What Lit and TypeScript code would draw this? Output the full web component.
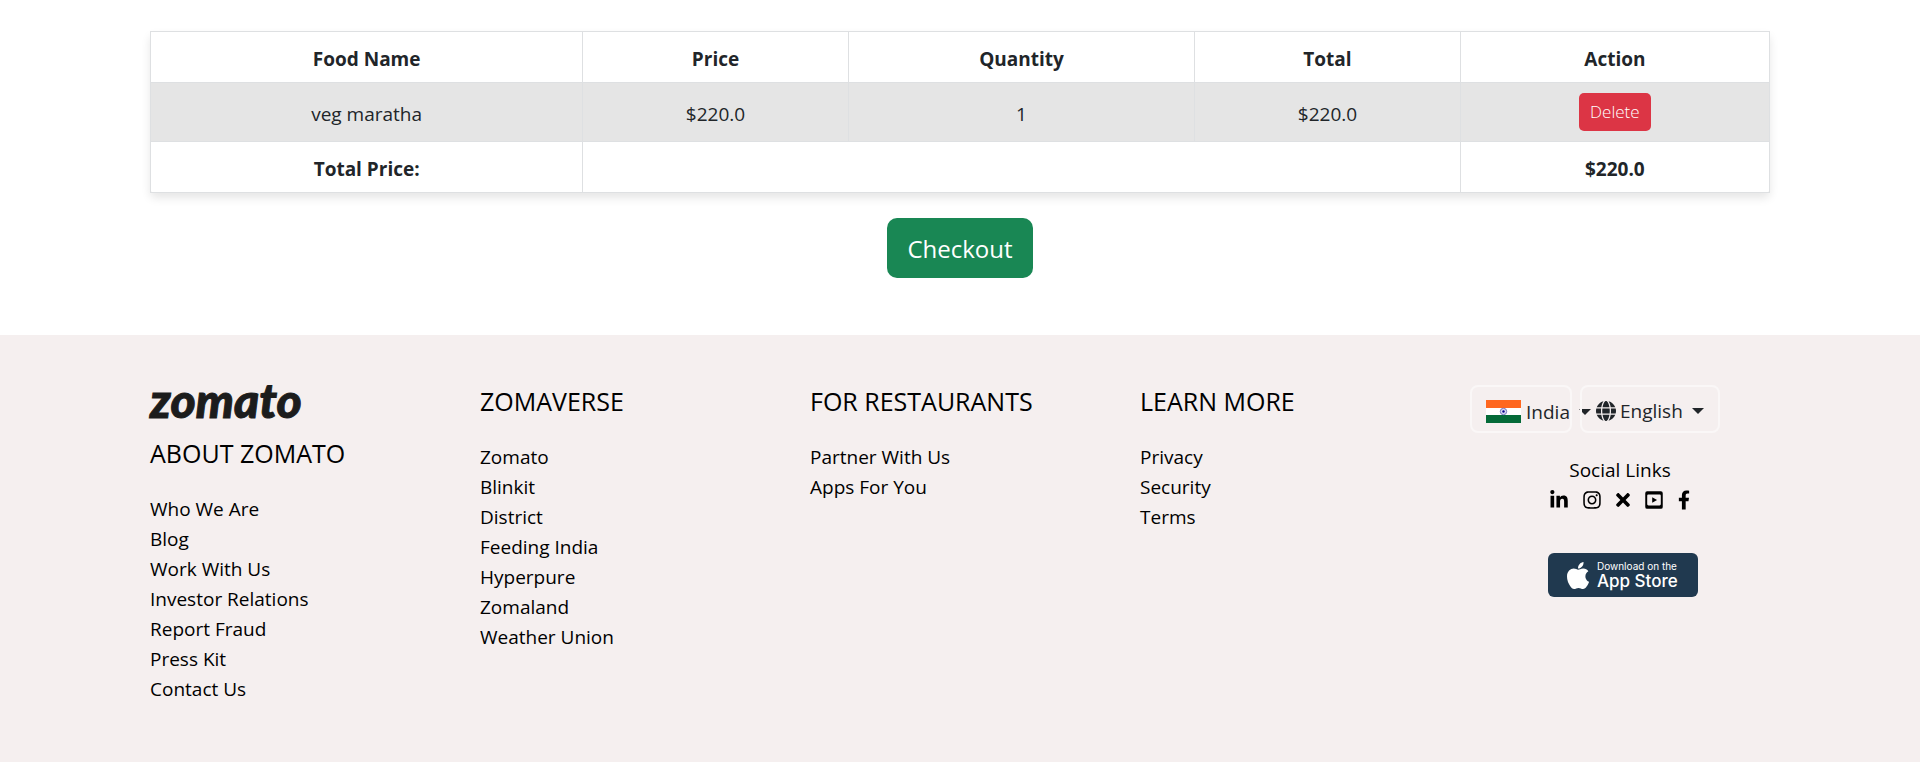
import { LitElement, html, css, svg } from "lit";
import { customElement } from "lit/decorators.js";

interface CartItem {
  name: string;
  price: number;
  quantity: number;
}

const money = (value: number) => `$${value.toFixed(1)}`;

@customElement("cart-table")
class CartTable extends LitElement {
  static styles = css`
    :host {
      display: block;
      border-radius: 5px;
      box-shadow: 0 5px 10px rgba(0, 0, 0, 0.1);
      background: #fff;
    }
    .table {
      width: 100%;
      table-layout: fixed;
      border-collapse: collapse;
      text-align: center;
      color: #212529;
    }
    .name { width: 26.7%; }
    .price { width: 16.4%; }
    .quantity { width: 21.4%; }
    .action { width: 19.1%; }
    .cell {
      border: 1px solid #dee0e2;
      padding: 12px 10px 8px;
      font-weight: 400;
      vertical-align: middle;
    }
    .strong { font-weight: 700; }
    .item { background: #e5e5e5; }
    .item .control { padding: 10px; }
    .delete {
      display: block;
      margin: 0 auto;
      border: 0;
      border-radius: 5px;
      background: #dc3545;
      color: #fff;
      font: 300 17px/28px "Open Sans", "Noto Sans", sans-serif;
      padding: 5px 11px;
      cursor: pointer;
    }
  `;

  private items: CartItem[] = [{ name: "veg maratha", price: 220, quantity: 1 }];

  render() {
    const total = this.items.reduce((sum, i) => sum + i.price * i.quantity, 0);
    return html`
      <table class="table">
        <colgroup>
          <col class="name" /><col class="price" /><col class="quantity" /><col class="price" /><col class="action" />
        </colgroup>
        <thead>
          <tr>
            ${["Food Name", "Price", "Quantity", "Total", "Action"].map(
              (h) => html`<th class="cell strong" scope="col">${h}</th>`
            )}
          </tr>
        </thead>
        <tbody>
          ${this.items.map(
            (i) => html`<tr class="item">
              <td class="cell">${i.name}</td>
              <td class="cell">${money(i.price)}</td>
              <td class="cell">${i.quantity}</td>
              <td class="cell">${money(i.price * i.quantity)}</td>
              <td class="cell control"><button class="delete" type="button">Delete</button></td>
            </tr>`
          )}
          <tr>
            <th class="cell strong" scope="row">Total Price:</th>
            <td class="cell" colspan="3"></td>
            <td class="cell strong">${money(total)}</td>
          </tr>
        </tbody>
      </table>
    `;
  }
}

interface LinkGroup {
  title: string;
  brand?: string;
  links: string[];
}

const groups: LinkGroup[] = [
  {
    title: "ABOUT ZOMATO",
    brand: "zomato",
    links: ["Who We Are", "Blog", "Work With Us", "Investor Relations", "Report Fraud", "Press Kit", "Contact Us"],
  },
  {
    title: "ZOMAVERSE",
    links: ["Zomato", "Blinkit", "District", "Feeding India", "Hyperpure", "Zomaland", "Weather Union"],
  },
  { title: "FOR RESTAURANTS", links: ["Partner With Us", "Apps For You"] },
  { title: "LEARN MORE", links: ["Privacy", "Security", "Terms"] },
];

const social = [
  {
    label: "LinkedIn",
    box: "0 0 448 512",
    width: 18,
    path: "M100.3 448H7.4V148.9h92.9zM53.8 108.1C24.1 108.1 0 83.5 0 53.8a53.8 53.8 0 0 1 107.6 0c0 29.7-24.1 54.3-53.8 54.3zM447.9 448h-92.700V302.400c0-34.700-.7-79.200-48.300-79.200-48.300 0-55.700 37.700-55.700 76.700V448h-92.800V148.900h89.100v40.800h1.300c12.400-23.500 42.700-48.300 87.900-48.300 94 0 111.300 61.900 111.300 142.300V448z",
  },
  {
    label: "Instagram",
    box: "0 0 448 512",
    width: 18,
    path: "M224.100 141c-63.600 0-114.900 51.300-114.900 114.900s51.300 114.900 114.900 114.900S339 319.500 339 255.900 287.700 141 224.100 141zm0 189.600c-41.100 0-74.700-33.500-74.700-74.700s33.500-74.700 74.700-74.700 74.700 33.500 74.700 74.700-33.600 74.700-74.700 74.700zm146.400-194.300c0 14.900-12 26.800-26.800 26.800-14.900 0-26.800-12-26.800-26.800s12-26.800 26.800-26.800 26.800 12 26.800 26.800zm76.100 27.200c-1.700-35.900-9.900-67.700-36.200-93.900-26.200-26.200-58-34.400-93.900-36.200-37-2.100-147.900-2.100-184.900 0-35.800 1.700-67.600 9.900-93.900 36.100s-34.400 58-36.200 93.900c-2.100 37-2.100 147.900 0 184.900 1.700 35.900 9.900 67.700 36.200 93.900s58 34.400 93.900 36.200c37 2.100 147.900 2.100 184.900 0 35.900-1.700 67.700-9.900 93.900-36.200 26.200-26.200 34.400-58 36.200-93.900 2.100-37 2.100-147.800 0-184.800zM398.800 388c-7.800 19.600-22.900 34.700-42.600 42.600-29.500 11.700-99.500 9-132.100 9s-102.700 2.600-132.100-9c-19.600-7.800-34.700-22.900-42.600-42.600-11.700-29.500-9-99.500-9-132.100s-2.600-102.700 9-132.100c7.800-19.600 22.900-34.700 42.600-42.600 29.500-11.700 99.500-9 132.100-9s102.700-2.600 132.100 9c19.600 7.800 34.700 22.900 42.600 42.600 11.700 29.500 9 99.500 9 132.100s2.700 102.700-9 132.100z",
  },
  {
    label: "X",
    box: "0 0 352 512",
    width: 14,
    path: "M242.700 256l100.100-100.100c12.300-12.300 12.300-32.200 0-44.500l-22.200-22.200c-12.300-12.300-32.200-12.300-44.500 0L176 189.300 75.900 89.200c-12.300-12.300-32.200-12.300-44.500 0L9.200 111.400c-12.300 12.300-12.300 32.200 0 44.500L109.300 256 9.200 356.100c-12.300 12.300-12.300 32.200 0 44.500l22.200 22.200c12.300 12.300 32.200 12.300 44.500 0L176 322.700l100.100 100.100c12.300 12.300 32.200 12.300 44.500 0l22.200-22.200c12.300-12.300 12.300-32.200 0-44.500L242.700 256z",
  },
  {
    label: "YouTube",
    box: "0 0 448 512",
    width: 18,
    path: "M48 32A48 48 0 0 0 0 80v352a48 48 0 0 0 48 48h352a48 48 0 0 0 48-48V80a48 48 0 0 0-48-48H48zM84 118h280c22 0 34 12 34 34v208c0 22-12 34-34 34H84c-22 0-34-12-34-34V152c0-22 12-34 34-34zM178 186v140l124-70z",
  },
  {
    label: "Facebook",
    box: "0 0 320 512",
    width: 12,
    path: "M279.100 288l14.200-92.700h-88.900v-60.100c0-25.300 12.400-50.100 52.200-50.100h40.400V6.300S260.400 0 225.400 0c-73.200 0-121.100 44.400-121.100 124.700v70.600H22.900V288h81.400v224h100.200V288z",
  },
];

const caret = svg`<path d="M0 0h12L6 6z" fill="currentColor" />`;

@customElement("site-footer")
class SiteFooter extends LitElement {
  static styles = css`
    :host {
      display: block;
      background: #f5efef;
      color: #000;
    }
    .inner {
      max-width: 1620px;
      margin: 0 auto;
      padding: 50px 15px;
      display: grid;
      grid-template-columns: repeat(5, minmax(0, 1fr));
      gap: 30px;
    }
    .group { padding-top: 1px; }
    .brand {
      display: block;
      height: 52px;
      color: #1c1c1c;
      font: italic 900 48px/28px Lato, "Open Sans", sans-serif;
      -webkit-text-stroke: 1px #1c1c1c;
      text-decoration: none;
    }
    .title {
      margin: 0 0 26px;
      font-size: 25px;
      line-height: 30px;
      font-weight: 500;
      white-space: nowrap;
    }
    .links {
      list-style: none;
      margin: 0;
      padding: 0;
    }
    .link {
      color: inherit;
      text-decoration: none;
    }
    .pickers {
      display: flex;
      gap: 8px;
    }
    .picker {
      box-sizing: border-box;
      display: flex;
      align-items: center;
      height: 48px;
      padding: 3px 14px 0;
      border: 2px solid #faf7f7;
      border-radius: 8px;
      color: #212529;
    }
    .country {
      width: 102px;
      padding-top: 5px;
    }
    .language { width: 140px; }
    .select {
      appearance: none;
      flex: none;
      border: 0;
      margin: 0;
      padding: 0;
      background: none;
      color: inherit;
      font: inherit;
    }
    .icon {
      display: block;
      flex: none;
    }
    .flag { margin-right: 5px; }
    .globe { margin-right: 4px; }
    .caret { margin-left: 9px; }
    .social {
      text-align: center;
      margin-top: 22px;
    }
    .icons {
      display: flex;
      justify-content: center;
      gap: 15px;
      padding-top: 5px;
    }
    .store {
      display: flex;
      justify-content: center;
      padding: 43px 0 0 6px;
    }
    .badge {
      box-sizing: border-box;
      width: 150px;
      height: 44px;
      border-radius: 6px;
      background: #20394f;
      color: #fff;
      display: flex;
      align-items: center;
      gap: 8px;
      padding-left: 19px;
      font-family: Inter, sans-serif;
      text-decoration: none;
      white-space: nowrap;
    }
    .small {
      display: block;
      font-size: 10px;
      line-height: 12px;
    }
    .large {
      display: block;
      font-size: 17px;
      line-height: 18px;
      font-weight: 500;
    }
  `;

  render() {
    return html`
      <div class="inner">
        ${groups.map(
          (g) => html`<nav class="group" aria-label=${g.title}>
            ${g.brand ? html`<a class="brand" href="#">${g.brand}</a>` : ""}
            <h5 class="title">${g.title}</h5>
            <ul class="links">
              ${g.links.map((l) => html`<li><a class="link" href="#">${l}</a></li>`)}
            </ul>
          </nav>`
        )}
        <div>
          <div class="pickers">
            <label class="picker country">
              <svg class="icon flag" width="35" height="23" viewBox="0 0 35 23" role="img" aria-label="Country">
                <path fill="#ff671f" d="M0 0h35v8H0z" />
                <path fill="#fff" d="M0 8h35v7H0z" />
                <path fill="#046a38" d="M0 15h35v8H0z" />
                <circle cx="17.5" cy="11.500" r="3.200" fill="#d9d9f2" stroke="#5a5ab0" stroke-width="0.8" />
                <circle cx="17.5" cy="11.500" r="1.200" fill="#06038d" />
              </svg>
              <select class="select"><option>India</option></select>
              <svg class="icon caret" width="12" height="6" viewBox="0 0 12 6" aria-hidden="true">${caret}</svg>
            </label>
            <label class="picker language">
              <svg class="icon globe" width="20" height="20" viewBox="0 0 512 512" role="img" aria-label="Language">
                <path
                  fill="currentColor"
                  d="M352 256c0 22.200-1.200 43.600-3.300 64H163.300c-2.200-20.400-3.300-41.800-3.300-64s1.200-43.600 3.300-64h185.400c2.200 20.400 3.300 41.800 3.300 64zm28.800-64h123.100c5.300 20.500 8.100 41.900 8.100 64s-2.800 43.500-8.100 64H380.800c2.100-20.600 3.200-42 3.200-64s-1.100-43.400-3.200-64zm112.600-32H376.700c-10-63.900-29.800-117.400-55.300-151.600 78.300 20.700 142 77.500 171.900 151.600zm-149.100 0H167.700c6.100-36.400 15.500-68.600 27-94.700 10.500-23.600 22.200-40.700 33.500-51.500C239.400 3.200 248.700 0 256 0s16.600 3.200 27.800 13.800c11.300 10.800 23 27.900 33.500 51.500 11.600 26 20.900 58.200 27 94.700zm-209 0H18.600c30-74.100 93.600-130.900 172-151.600-25.500 34.200-45.300 87.700-55.300 151.600zM8.100 192h123.100c-2.100 20.600-3.200 42-3.200 64s1.100 43.400 3.200 64H8.100C2.800 299.500 0 278.100 0 256s2.800-43.500 8.100-64zm186.600 254.600c-11.600-26-20.900-58.200-27-94.600h176.600c-6.100 36.400-15.500 68.600-27 94.600-10.500 23.600-22.200 40.700-33.500 51.500C272.600 508.800 263.300 512 256 512s-16.600-3.200-27.800-13.800c-11.300-10.800-23-27.900-33.500-51.500zM135.300 352c10 63.900 29.800 117.400 55.300 151.600C112.200 482.900 48.600 426.100 18.600 352h116.700zm358.100 0c-30 74.100-93.600 130.900-171.900 151.600 25.500-34.200 45.200-87.700 55.300-151.600h116.600z"
                />
              </svg>
              <select class="select"><option>English</option></select>
              <svg class="icon caret" width="12" height="6" viewBox="0 0 12 6" aria-hidden="true">${caret}</svg>
            </label>
          </div>
          <div class="social">
            Social Links
            <div class="icons">
              ${social.map(
                (s) => html`<a class="link" href="#" aria-label=${s.label}>
                  <svg class="icon" width=${s.width} height="20" viewBox=${s.box}>
                    <path fill="currentColor" fill-rule="evenodd" d=${s.path} />
                  </svg>
                </a>`
              )}
            </div>
          </div>
          <div class="store">
            <a class="badge" href="#">
              <svg class="icon" width="22" height="27" viewBox="4 30 376 450" preserveAspectRatio="none" aria-hidden="true">
                <path
                  fill="currentColor"
                  d="M318.700 268.700c-.2-36.700 16.400-64.400 50-84.800-18.800-26.900-47.200-41.700-84.700-44.600-35.500-2.800-74.300 20.700-88.500 20.700-15 0-49.400-19.700-76.400-19.700C63.300 141.200 4 184.800 4 273.500q0 39.300 14.400 81.200c12.800 36.700 59 126.700 107.200 125.200 25.200-.6 43-17.900 75.800-17.900 31.800 0 48.300 17.900 76.400 17.900 48.600-.7 90.400-82.500 102.600-119.300-65.200-30.700-61.700-90-61.700-91.900zm-56.600-164.200c27.300-32.400 24.800-61.900 24-72.500-24.100 1.400-52 16.400-67.900 34.900-17.500 19.800-27.800 44.300-25.600 71.900 26.100 2 49.900-11.400 69.500-34.300z"
                />
              </svg>
              <span>
                <span class="small">Download on the</span>
                <span class="large">App Store</span>
              </span>
            </a>
          </div>
        </div>
      </div>
    `;
  }
}

@customElement("app-root")
class AppRoot extends LitElement {
  static styles = css`
    :host {
      display: flex;
      flex-direction: column;
      min-height: 100vh;
      background: #fff;
      color: #212529;
      font: 400 19px/30px "Open Sans", "Noto Sans", sans-serif;
    }
    .main {
      box-sizing: border-box;
      width: 100%;
      max-width: 1650px;
      margin: 0 auto;
      padding: 31px 15px 57px;
    }
    .checkout {
      display: block;
      margin: 25px auto 0;
      border: 0;
      border-radius: 10px;
      padding: 12px 20px 10px;
      background: #198754;
      color: #fff;
      font: 400 24px/38px "Open Sans", "Noto Sans", sans-serif;
      cursor: pointer;
    }
    .footer { flex: 1; }
  `;

  render() {
    return html`
      <main class="main">
        <cart-table></cart-table>
        <button class="checkout" type="button">Checkout</button>
      </main>
      <site-footer class="footer"></site-footer>
    `;
  }
}
